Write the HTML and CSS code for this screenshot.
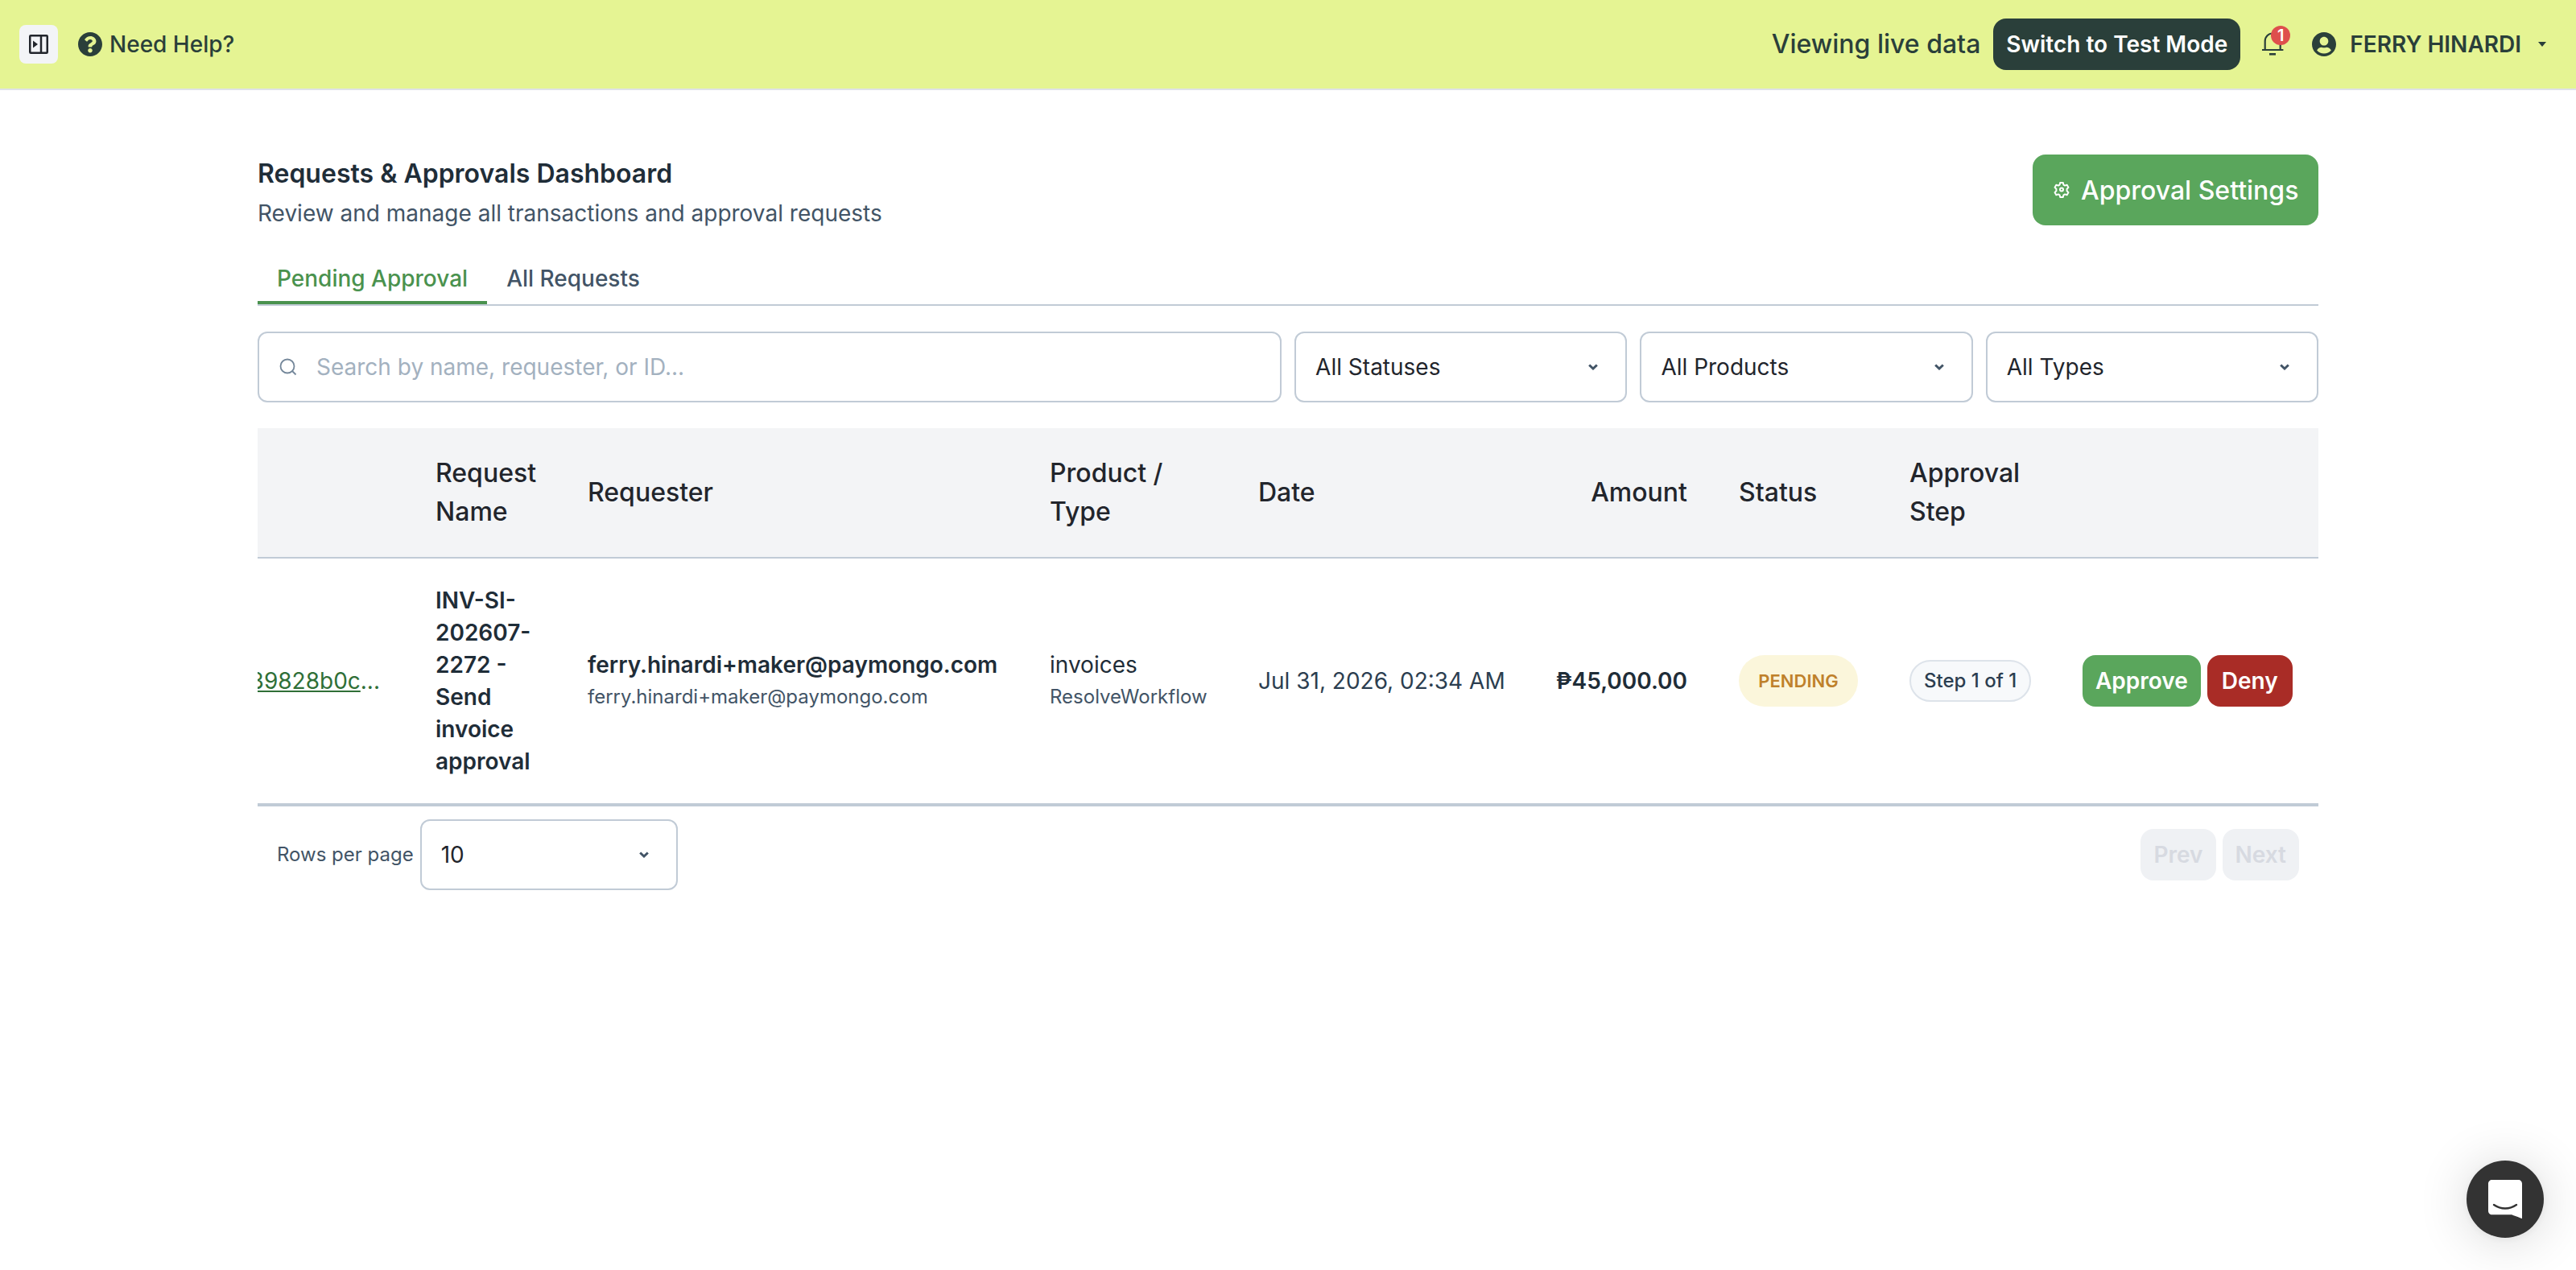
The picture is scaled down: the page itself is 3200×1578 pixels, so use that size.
FILE: index.html
```html
<!DOCTYPE html>
<html lang="en">

<head>
    <meta charset="UTF-8">
    <meta name="viewport" content="width=device-width, initial-scale=1.0">
    <title>Requests &amp; Approvals Dashboard</title>
    <link rel="stylesheet" href="styles.css">
</head>

<body>
    <header class="topbar">
        <div class="topbar-left">
            <button class="toggle" aria-label="Toggle sidebar">
                <svg width="24" height="24" viewBox="0 0 24 24">
                    <rect x="1.25" y="1.25" width="21.5" height="21.5" rx="1" fill="none" stroke="#22252c" stroke-width="2.5" />
                    <path d="M15 1v22" stroke="#22252c" stroke-width="2.5" />
                    <path d="M5 7.5v9l6-4.5z" fill="#22252c" />
                </svg>
            </button>
            <a class="help">
                <svg width="30" height="30" viewBox="8 8 496 496">
                    <path fill="#2a3f3a" d="M504 256c0 136.997-111.043 248-248 248S8 392.997 8 256C8 119.083 119.043 8 256 8s248 111.083 248 248zM262.655 90c-54.497 0-89.255 22.957-116.549 63.758-3.536 5.286-2.353 12.415 2.715 16.258l34.699 26.310c5.205 3.947 12.621 3.008 16.665-2.122 17.864-22.658 30.113-35.797 57.303-35.797 20.429 0 45.698 13.148 45.698 32.958 0 14.976-12.363 22.667-32.534 33.976C247.128 238.528 216 254.941 216 296v4c0 6.627 5.373 12 12 12h56c6.627 0 12-5.373 12-12v-1.333c0-28.462 83.186-29.647 83.186-106.667 0-58.002-60.165-102-116.531-102zM256 338c-25.365 0-46 20.635-46 46 0 25.364 20.635 46 46 46s46-20.636 46-46c0-25.364-20.635-46-46-46z" />
                </svg>
                <span>Need Help?</span>
            </a>
        </div>
        <div class="topbar-right">
            <span class="mode">Viewing live data</span>
            <button class="btn btn-dark">Switch to Test Mode</button>
            <div class="bell">
                <svg width="28" height="30" viewBox="0 0 28 30">
                    <path d="M4.700 22V11a9.500 9.500 0 0 1 19 0v11M1 22h26.400" fill="none" stroke="#2a3f3a" stroke-width="2.200" />
                    <path d="M10 26h8v2.600h-8z" fill="#2a3f3a" />
                </svg>
                <span class="count">1</span>
            </div>
            <div class="user">
                <svg width="30" height="30" viewBox="0 8 496 496">
                    <path fill="#2a3f3a" d="M248 8C111 8 0 119 0 256s111 248 248 248 248-111 248-248S385 8 248 8zm0 96c48.600 0 88 39.400 88 88s-39.400 88-88 88-88-39.400-88-88 39.400-88 88-88zm0 344c-58.700 0-111.300-26.600-146.500-68.200 18.800-35.400 55.600-59.800 98.500-59.800 2.400 0 4.800.4 7.100 1.100 13 4.200 26.600 6.900 40.900 6.900 14.300 0 28-2.700 40.900-6.900 2.300-.7 4.700-1.100 7.100-1.100 42.900 0 79.700 24.400 98.500 59.800C359.300 421.400 306.700 448 248 448z" />
                </svg>
                <span>FERRY HINARDI</span>
                <svg class="caret" width="10" height="6" viewBox="0 0 10 6">
                    <path d="M0 0h10L5 6z" fill="#2a3f3a" />
                </svg>
            </div>
        </div>
    </header>

    <main class="page">
        <div class="page-head">
            <div>
                <h1>Requests &amp; Approvals Dashboard</h1>
                <p>Review and manage all transactions and approval requests</p>
            </div>
            <button class="btn-settings">
                <svg width="20" height="20" viewBox="0 0 20 20" fill="none" stroke="#fff" stroke-width="2" stroke-linejoin="round">
                    <path d="M8.200 1h3.600l.6 2.600 1.700 1 2.600-.8 1.800 3.100-1.900 1.900v2.400l1.900 1.900-1.800 3.100-2.600-.8-1.700 1-.6 2.600H8.200l-.6-2.600-1.700-1-2.600.8-1.800-3.100 1.900-1.900V8.800L1.500 6.900l1.800-3.100 2.600.8 1.700-1z" />
                    <circle cx="10" cy="9.500" r="2" />
                </svg>
                <span>Approval Settings</span>
            </button>
        </div>

        <nav class="tabs">
            <a class="tab active">Pending Approval</a>
            <a class="tab">All Requests</a>
        </nav>

        <div class="filters">
            <div class="field">
                <svg class="search-icon" width="22" height="22" viewBox="0 0 22 22" fill="none" stroke="#74879a" stroke-width="1.800">
                    <circle cx="10" cy="10" r="8.500" />
                    <path d="M16 16l4.500 4.500" />
                </svg>
                <span class="placeholder">Search by name, requester, or ID...</span>
            </div>
            <div class="field select">
                <span>All Statuses</span>
                <svg class="chevron" width="12" height="8" viewBox="0 0 12 8"><path d="M1.200 1.500L6 6l4.800-4.500" /></svg>
            </div>
            <div class="field select">
                <span>All Products</span>
                <svg class="chevron" width="12" height="8" viewBox="0 0 12 8"><path d="M1.200 1.500L6 6l4.800-4.500" /></svg>
            </div>
            <div class="field select">
                <span>All Types</span>
                <svg class="chevron" width="12" height="8" viewBox="0 0 12 8"><path d="M1.200 1.500L6 6l4.800-4.500" /></svg>
            </div>
        </div>

        <table class="requests">
            <colgroup>
                <col class="c-id">
                <col class="c-name">
                <col class="c-requester">
                <col class="c-product">
                <col class="c-date">
                <col class="c-amount">
                <col class="c-status">
                <col class="c-step">
                <col class="c-actions">
            </colgroup>
            <thead>
                <tr>
                    <th></th>
                    <th>Request Name</th>
                    <th>Requester</th>
                    <th>Product / Type</th>
                    <th>Date</th>
                    <th class="right">Amount</th>
                    <th>Status</th>
                    <th>Approval Step</th>
                    <th></th>
                </tr>
            </thead>
            <tbody>
                <tr>
                    <td class="id-cell"><div class="id"><span><a>39828b0c</a>...</span></div></td>
                    <td class="strong">INV-SI-202607-2272 - Send invoice approval</td>
                    <td>
                        <div class="strong">ferry.hinardi+maker@paymongo.com</div>
                        <div class="sub">ferry.hinardi+maker@paymongo.com</div>
                    </td>
                    <td>
                        <div>invoices</div>
                        <div class="sub">ResolveWorkflow</div>
                    </td>
                    <td class="date">Jul 31, 2026, 02:34 AM</td>
                    <td class="strong right">₱45,000.00</td>
                    <td><span class="badge pending">PENDING</span></td>
                    <td><span class="badge step">Step 1 of 1</span></td>
                    <td>
                        <div class="actions">
                            <button class="btn btn-green">Approve</button>
                            <button class="btn btn-red">Deny</button>
                        </div>
                    </td>
                </tr>
            </tbody>
        </table>

        <div class="pagination">
            <span class="rows-label">Rows per page</span>
            <div class="field select rows">
                <span>10</span>
                <svg class="chevron" width="12" height="8" viewBox="0 0 12 8"><path d="M1.200 1.500L6 6l4.800-4.500" /></svg>
            </div>
            <div class="pager">
                <button class="btn btn-disabled" disabled>Prev</button>
                <button class="btn btn-disabled" disabled>Next</button>
            </div>
        </div>
    </main>

    <button class="launcher" aria-label="Open chat">
        <svg width="42" height="48" viewBox="0 0 42 48">
            <path d="M42 48s-6.700-2.400-12.800-4.800H4.700C2.100 43.200 0 41.100 0 38.400V4.800C0 2.100 2.100 0 4.700 0h32.700C40 0 42 2.100 42 4.800z" fill="#fff" />
            <path d="M7 31q6.500 4.500 14 4.500T35 31" fill="none" stroke="#333" stroke-width="2.400" stroke-linecap="round" />
        </svg>
    </button>
</body>

</html>
```

FILE: styles.css
```css
* {
    box-sizing: border-box;
}

body {
    margin: 0;
    min-height: 1578px;
    background-color: #fff;
    color: #1f2d38;
    font-family: Inter, "Liberation Sans", sans-serif;
    font-size: 28px;
    line-height: 40px;
}

button {
    border: none;
    padding: 0;
    font-family: inherit;
}

svg {
    display: block;
    flex: none;
}

.topbar {
    display: flex;
    justify-content: space-between;
    align-items: center;
    height: 112px;
    padding: 0 37px 0 24px;
    background-color: #e5f493;
    border-bottom: 2px solid #dfe2e8;
    color: #2a3f3a;
    white-space: nowrap;
}

.topbar-left,
.topbar-right,
.help,
.user {
    display: flex;
    align-items: center;
}

.toggle {
    display: flex;
    align-items: center;
    justify-content: center;
    width: 48px;
    height: 48px;
    margin-right: 25px;
    border-radius: 8px;
    background-color: #f3f4f7;
}

.help {
    gap: 9px;
    font-weight: 500;
}

.mode {
    margin-right: 16px;
    font-size: 32px;
    font-weight: 500;
}

.btn {
    height: 64px;
    padding: 0 16px;
    border-radius: 16px;
    color: #fff;
    font-size: 28px;
    font-weight: 600;
    line-height: 40px;
}

.btn-dark {
    background-color: #2a3f3a;
}

.btn-green {
    background-color: #5aa65c;
}

.btn-red {
    padding: 0 18px;
    background-color: #a92c26;
}

.btn-disabled {
    background-color: #eff1f4;
    color: #d7dae1;
}

.bell {
    position: relative;
    margin: 0 35px 0 26px;
}

.count {
    position: absolute;
    top: -8px;
    left: 12px;
    width: 24px;
    height: 24px;
    border-radius: 50%;
    background-color: #de4f4c;
    color: #fff;
    font-size: 20px;
    font-weight: 600;
    line-height: 24px;
    text-align: center;
}

.user {
    font-weight: 600;
}

.user span {
    margin: 0 21px 0 17px;
}

.page {
    width: 2560px;
    margin: 0 auto;
    padding-top: 80px;
}

.page-head {
    display: flex;
    justify-content: space-between;
    align-items: flex-start;
}

h1 {
    margin: 0;
    font-size: 32px;
    font-weight: 600;
    line-height: 48px;
}

.page-head p {
    margin: 5px 0 0;
    color: #425466;
}

.btn-settings {
    display: flex;
    align-items: center;
    gap: 14px;
    width: 355px;
    height: 88px;
    padding: 0 0 0 26px;
    border-radius: 16px;
    background-color: #5aa65c;
    color: #fff;
    font-size: 32px;
    font-weight: 500;
    white-space: nowrap;
}

.tabs {
    display: flex;
    height: 60px;
    margin-top: 35px;
    border-bottom: 2px solid #c1cbd6;
}

.tab {
    height: 58px;
    padding: 6px 24px 0;
    color: #425466;
    font-weight: 500;
}

.tab.active {
    border-bottom: 4px solid #4a924e;
    color: #4a924e;
}

.filters {
    display: grid;
    grid-template-columns: 1fr 413.3px 413.3px 413.3px;
    gap: 16px;
    margin: 32px 0;
}

.field {
    display: flex;
    align-items: center;
    height: 88px;
    padding: 0 24px;
    border: 2px solid #c1cbd6;
    border-radius: 12px;
    color: #22252c;
}

.select {
    justify-content: space-between;
    padding-right: 34px;
}

.chevron {
    fill: none;
    stroke: #425466;
    stroke-width: 3;
}

.search-icon {
    margin: 0 24px 0 1px;
}

.placeholder {
    color: #a3b1bf;
}

.requests {
    width: 100%;
    table-layout: fixed;
    border-collapse: separate;
    border-spacing: 0;
}

.c-id { width: 189px; }
.c-name { width: 189px; }
.c-requester { width: 574px; }
.c-product { width: 259px; }
.c-date { width: 370px; }
.c-amount { width: 227px; }
.c-status { width: 212px; }
.c-step { width: 215px; }
.c-actions { width: 325px; }

th {
    height: 162px;
    padding: 0 32px;
    background-color: #f3f4f6;
    border-bottom: 2px solid #c1cbd6;
    color: #22252c;
    font-size: 32px;
    font-weight: 500;
    line-height: 48px;
    text-align: left;
}

td {
    height: 306px;
    padding: 32px;
    border-bottom: 2px solid #c1cbd6;
}

.right {
    text-align: right;
}

.strong {
    font-weight: 600;
}

.sub {
    color: #425466;
    font-size: 24px;
}

.date {
    color: #2c3e50;
    white-space: nowrap;
}

.id-cell {
    padding: 32px 37px 32px 0;
}

/* long ids keep their tail visible */
.id {
    display: flex;
    justify-content: flex-end;
    overflow: hidden;
    color: #2f6f37;
    white-space: nowrap;
}

.id a {
    text-decoration: underline;
}

.badge {
    display: inline-block;
    vertical-align: middle;
    border-radius: 32px;
    font-size: 24px;
    white-space: nowrap;
}

.pending {
    min-width: 148px;
    padding: 12px 0;
    background-color: #fbf6db;
    color: #bf812b;
    font-size: 22px;
    font-weight: 600;
    text-align: center;
}

.step {
    padding: 4px 16px;
    border: 2px solid #dde3ea;
    background-color: #f7f9fb;
    color: #2c3e50;
    font-weight: 500;
}

.actions,
.pager {
    display: flex;
    gap: 8px;
}

.pagination {
    display: flex;
    align-items: center;
    padding: 16px 24px;
    border-top: 2px solid #c1cbd6;
}

.rows-label {
    margin-right: 8px;
    color: #425466;
    font-size: 24px;
}

.rows {
    width: 320px;
}

.pager {
    margin-left: auto;
}

.launcher {
    position: fixed;
    right: 40px;
    bottom: 40px;
    display: flex;
    align-items: center;
    justify-content: center;
    width: 96px;
    height: 96px;
    border-radius: 50%;
    background-color: #333;
    box-shadow: 0 2px 12px rgba(0, 0, 0, 0.06), 0 4px 64px rgba(0, 0, 0, 0.16);
}
```
